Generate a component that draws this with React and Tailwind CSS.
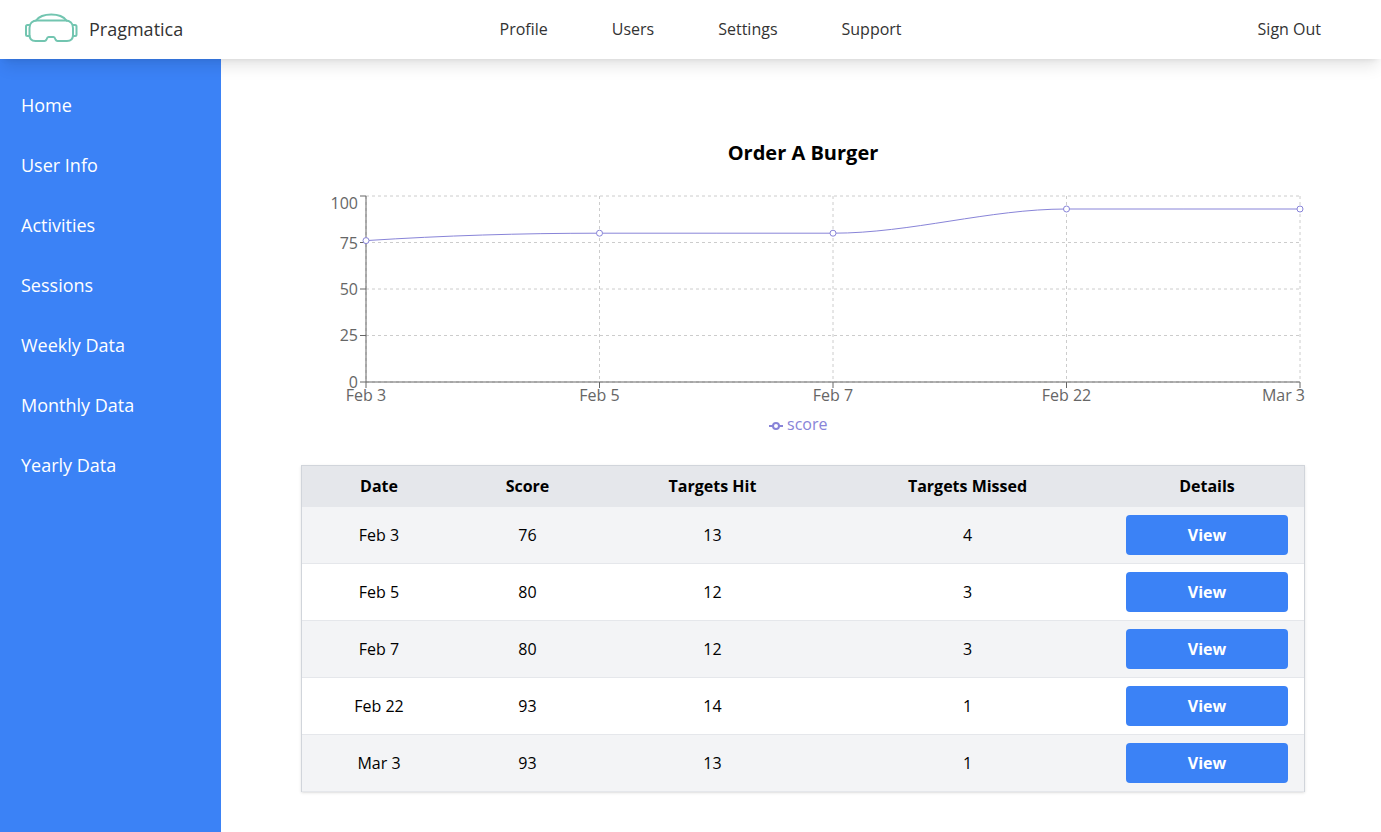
import React from 'react';

const navLinks = ['Profile', 'Users', 'Settings', 'Support'];
const sideLinks = ['Home', 'User Info', 'Activities', 'Sessions', 'Weekly Data', 'Monthly Data', 'Yearly Data'];

const rows = [
    { date: 'Feb 3', score: 76, hit: 13, missed: 4 },
    { date: 'Feb 5', score: 80, hit: 12, missed: 3 },
    { date: 'Feb 7', score: 80, hit: 12, missed: 3 },
    { date: 'Feb 22', score: 93, hit: 14, missed: 1 },
    { date: 'Mar 3', score: 93, hit: 13, missed: 1 },
];

const HeadsetLogo = () => (
    <svg width="53" height="30" viewBox="0 0 53 30" fill="none" stroke="#72c5b0" strokeWidth="2" strokeLinejoin="round" strokeLinecap="round" className="mt-[-1px]">
        <path d="M11 7.5 C14 3.5 19 1.5 26.25 1.5 C33.5 1.5 38.5 3.5 41.5 7.5" />
        <path d="M12 7.5 H40.5 C45 7.5 48 10.5 48 15 V22 C48 26 46 28 42 28 H32.5 C31.5 28 31 27.5 30.5 26.5 C30 25 29.5 24 28.5 24 H23.5 C22.5 24 22 25 21.5 26.5 C21 27.5 20.5 28 19.5 28 H10.5 C6.5 28 4.5 26 4.5 22 V15 C4.5 10.5 7.5 7.5 12 7.5 Z" />
        <path d="M4.5 12 H2.5 C1.5 12 1 12.5 1 13.5 V21.5 C1 22.5 1.5 23 2.5 23 H4.5" />
        <path d="M48 12 H50 C51 12 51.5 12.5 51.5 13.5 V21.5 C51.5 22.5 51 23 50 23 H48" />
    </svg>
);

const ScoreChart = () => {
    // Coordenadas del área de dibujo dentro del svg
    const xs = [65, 298.5, 532, 765.5, 999];
    const ys = [74.6, 67.2, 67.2, 43, 43];
    const yTicks = [
        { label: '100', y: 30, base: 43 },
        { label: '75', y: 76.5, base: 82.5 },
        { label: '50', y: 123, base: 129 },
        { label: '25', y: 169.5, base: 175 },
        { label: '0', y: 216, base: 222 },
    ];
    const xLabels = ['Feb 3', 'Feb 5', 'Feb 7', 'Feb 22'];
    const linea = 'M65 74.6 C143 69.6 220 67.2 298.5 67.2 C376 67.2 454 67.2 532 67.2 C610 67.2 688 43 765.5 43 C843 43 921 43 999 43';

    return (
        <svg width="1010" height="280" viewBox="0 0 1010 280" className="block" fontFamily="'Open Sans', sans-serif">
            <g stroke="#ccc" strokeDasharray="3 3" fill="none">
                {yTicks.map((t) => (
                    <line key={t.label} x1="65" x2="999" y1={t.y} y2={t.y} />
                ))}
                {xs.map((x) => (
                    <line key={x} x1={x} x2={x} y1="30" y2="216" />
                ))}
            </g>
            <g stroke="#666" fill="none">
                <line x1="65" x2="65" y1="30" y2="216" />
                <line x1="65" x2="999" y1="216" y2="216" />
                {yTicks.map((t) => (
                    <line key={t.label} x1="59" x2="65" y1={t.y} y2={t.y} />
                ))}
                {xs.map((x) => (
                    <line key={x} x1={x} x2={x} y1="216" y2="222" />
                ))}
            </g>
            <g fill="#666" fontSize="16">
                {yTicks.map((t) => (
                    <text key={t.label} x="57" y={t.base} textAnchor="end">{t.label}</text>
                ))}
                {xLabels.map((label, i) => (
                    <text key={label} x={xs[i]} y="235" textAnchor="middle">{label}</text>
                ))}
                <text x="1004" y="235" textAnchor="end">Mar 3</text>
            </g>
            <path d={linea} fill="none" stroke="#8884d8" />
            {xs.map((x, i) => (
                <circle key={x} cx={x} cy={ys[i]} r="3" fill="#fff" stroke="#8884d8" />
            ))}
            <line x1="468" x2="482" y1="260" y2="260" stroke="#8884d8" strokeWidth="2" />
            <circle cx="475" cy="260" r="3" fill="#fff" stroke="#8884d8" strokeWidth="2" />
            <text x="486" y="264" fill="#8884d8" fontSize="16">score</text>
        </svg>
    );
};

export default function App() {
    return (
        <div className="h-[832px] flex flex-col bg-white overflow-hidden font-['Open_Sans',sans-serif]">
            {/* Barra superior */}
            <header className="relative z-10 h-[59px] shrink-0 flex items-center bg-white shadow-lg pb-[2px]">
                <div className="w-[221px] flex items-center pl-[25px] gap-[11px]">
                    <HeadsetLogo />
                    <span className="text-lg text-[#333]">Pragmatica</span>
                </div>
                <nav className="flex gap-[64px] ml-[278.5px] text-base text-[#333]">
                    {navLinks.map((link) => (
                        <span key={link}>{link}</span>
                    ))}
                </nav>
                <span className="ml-auto mr-[60px] text-base text-[#333]">Sign Out</span>
            </header>

            <div className="flex flex-1 min-h-0">
                {/* Menú lateral */}
                <aside className="w-[221px] shrink-0 bg-[#3b82f6] pt-[16px]">
                    {sideLinks.map((link) => (
                        <div key={link} className="h-[60px] flex items-center pl-[21px] text-lg text-white">
                            {link}
                        </div>
                    ))}
                </aside>

                <main className="flex-1 pl-[80px] pt-[80px]">
                    <h2 className="w-[1004px] text-center text-xl leading-[28px] font-bold text-black">Order A Burger</h2>
                    <div className="mt-[-1px]">
                        <ScoreChart />
                    </div>

                    {/* Tabla de resultados */}
                    <div className="mt-[19px] w-[1004px] border border-b-0 border-[#d1d5db] shadow">
                        <table className="w-full table-fixed border-separate border-spacing-0 text-base text-black">
                            <colgroup>
                                <col className="w-[154px]" />
                                <col className="w-[143px]" />
                                <col className="w-[227px]" />
                                <col className="w-[283px]" />
                                <col className="w-[195px]" />
                            </colgroup>
                            <thead>
                                <tr className="h-[41px] bg-[#e5e7eb] font-bold">
                                    <th className="pb-[1px]">Date</th>
                                    <th className="pb-[1px]">Score</th>
                                    <th className="pb-[1px]">Targets Hit</th>
                                    <th className="pb-[1px]">Targets Missed</th>
                                    <th className="pb-[1px] pl-[1px]">Details</th>
                                </tr>
                            </thead>
                            <tbody>
                                {rows.map((row, index) => (
                                    <tr key={row.date} className={`h-[57px] text-center ${index % 2 === 0 ? 'bg-[#f3f4f6]' : 'bg-white'}`}>
                                        <td className="border-b border-[#e5e7eb]">{row.date}</td>
                                        <td className="border-b border-[#e5e7eb]">{row.score}</td>
                                        <td className="border-b border-[#e5e7eb]">{row.hit}</td>
                                        <td className="border-b border-[#e5e7eb]">{row.missed}</td>
                                        <td className="pl-[17px] pr-[16px] border-b border-[#e5e7eb]">
                                            <button className="w-full h-[40px] rounded bg-[#3b82f6] text-white font-bold">View</button>
                                        </td>
                                    </tr>
                                ))}
                            </tbody>
                        </table>
                    </div>
                </main>
            </div>
        </div>
    );
}
